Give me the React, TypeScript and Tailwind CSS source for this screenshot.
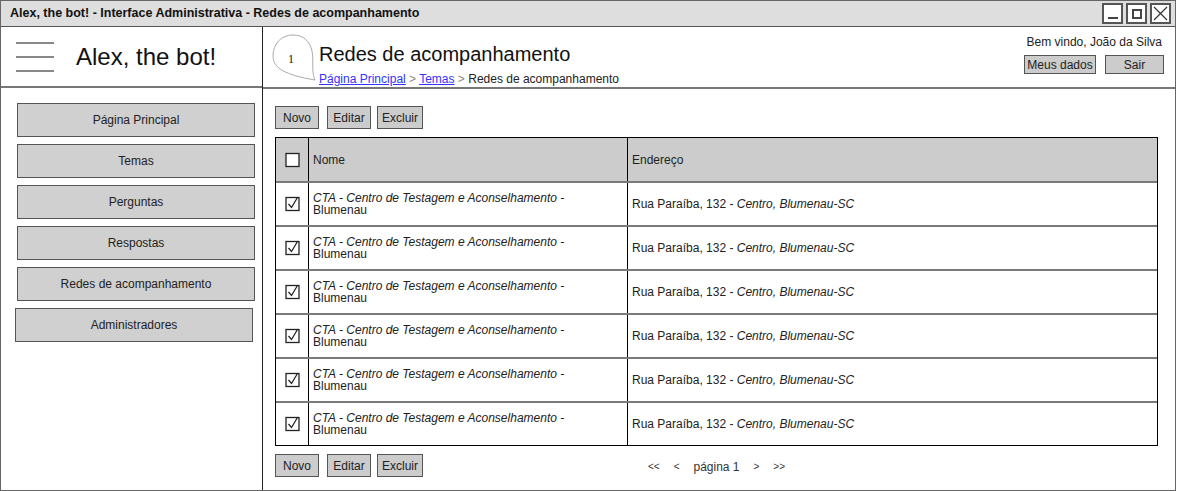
import React from "react";

const menu = [
  "Página Principal",
  "Temas",
  "Perguntas",
  "Respostas",
  "Redes de acompanhamento",
  "Administradores",
];

function Btn({ children, w }: { children: React.ReactNode; w: string }) {
  return (
    <div
      className={`${w} h-[23px] bg-[#cccccc] border-[1.5px] border-[#555] flex items-center justify-center text-[12px] text-[#222]`}
    >
      {children}
    </div>
  );
}

function CheckBox({ checked }: { checked: boolean }) {
  return (
    <svg width="16" height="16" viewBox="0 0 16 16">
      <rect x="1" y="1.5" width="13" height="13" fill="white" stroke="#222" strokeWidth="1.3" />
      {checked && (
        <path d="M3.5 8 L6.5 11.5 L12.5 1.5" fill="none" stroke="#222" strokeWidth="1.3" />
      )}
    </svg>
  );
}

function Row() {
  return (
    <div className="h-[44px] flex border-t-2 border-[#7a7a7a] text-[12px] text-[#222]">
      <div className="w-[33px] flex items-center justify-center border-r border-black pl-[1px]">
        <CheckBox checked />
      </div>
      <div className="w-[319px] border-r border-black flex flex-col justify-center pl-[4px] leading-[12px]">
        <span className="italic">CTA - Centro de Testagem e Aconselhamento -</span>
        <span>Blumenau</span>
      </div>
      <div className="flex-1 flex items-center pl-[4px]">
        <span>
          Rua Paraíba, 132 - <span className="italic">Centro, Blumenau-SC</span>
        </span>
      </div>
    </div>
  );
}

export default function App() {
  return (
    <div
      className="w-[1186px] h-[491px] bg-white"
      style={{ fontFamily: '"Liberation Sans", Arial, sans-serif' }}
    >
      <div className="w-[1176px] h-[491px] border-[1.5px] border-[#666] flex flex-col">
        {/* Title bar */}
        <div className="h-[26px] bg-[#dedede] border-b-[1.5px] border-[#555] flex items-center justify-between pl-[9px] pr-[4px] shrink-0">
          <span className="text-[12.5px] font-bold text-[#111]">
            Alex, the bot! - Interface Administrativa - Redes de acompanhamento
          </span>
          <div className="flex gap-[3px]">
            <div className="w-[21px] h-[21px] border-2 border-[#555] bg-white flex items-end justify-center pb-[3px]">
              <div className="w-[10px] h-[2px] bg-[#444]" />
            </div>
            <div className="w-[21px] h-[21px] border-2 border-[#555] bg-white flex items-center justify-center">
              <div className="w-[10px] h-[10px] border-2 border-[#444]" />
            </div>
            <div className="w-[21px] h-[21px] border-2 border-[#555] bg-white flex items-center justify-center">
              <svg width="15" height="15" viewBox="0 0 15 15">
                <path d="M1 1 L14 14 M14 1 L1 14" stroke="#333" strokeWidth="1.2" />
              </svg>
            </div>
          </div>
        </div>

        <div className="flex flex-1 min-h-0">
          {/* Left panel */}
          <div className="w-[262px] border-r-[1.5px] border-[#222] flex flex-col shrink-0">
            <div className="h-[61px] border-b-2 border-[#777] flex items-center shrink-0">
              <div className="ml-[15px] w-[38px] flex flex-col gap-[12px]">
                <div className="h-[2px] bg-[#888]" />
                <div className="h-[2px] bg-[#888]" />
                <div className="h-[2px] bg-[#888]" />
              </div>
              <span className="ml-[22px] text-[24px] text-[#111] leading-none">Alex, the bot!</span>
            </div>
            <div className="flex flex-col gap-[7px] pt-[15px] pl-[16px]">
              {menu.map((m, i) => (
                <div
                  key={m}
                  className={`w-[238px] h-[34px] bg-[#d0d0d0] border-[1.5px] border-[#555] flex items-center justify-center text-[12px] text-[#222] ${
                    i === 5 ? "-ml-[2px]" : ""
                  }`}
                >
                  {m}
                </div>
              ))}
            </div>
          </div>

          {/* Right panel */}
          <div className="flex-1 flex flex-col min-w-0">
            <div className="h-[62px] border-b-2 border-[#777] flex justify-between shrink-0">
              <div className="flex items-start pl-[8px] pt-[6px]">
                <div className="relative w-[48px] h-[50px]">
                  <svg width="48" height="50" viewBox="0 0 48 50">
                    <path
                      d="M22 2 C10 2 2 11 2 23 C2 35 14 42 44 47 C40 38 43 28 41 18 C39 8 32 2 22 2 Z"
                      fill="white"
                      stroke="#aaa"
                      strokeWidth="1"
                    />
                  </svg>
                  <span className="absolute left-[17px] top-[17px] text-[12px] text-[#111]" style={{ fontFamily: '"Liberation Serif", serif' }}>
                    1
                  </span>
                </div>
                <div className="flex flex-col">
                  <span className="text-[20px] text-[#111] leading-[24px] mt-[9px]">Redes de acompanhamento</span>
                  <span className="text-[12px] leading-[14px] mt-[6px]">
                    <span className="text-[#3333ff] underline">Página Principal</span>
                    <span className="text-[#888]"> &gt; </span>
                    <span className="text-[#3333ff] underline">Temas</span>
                    <span className="text-[#888]"> &gt; </span>
                    <span className="text-[#222]">Redes de acompanhamento</span>
                  </span>
                </div>
              </div>
              <div className="flex flex-col items-end pr-[11px] pt-[8px]">
                <span className="text-[12px] text-[#222] leading-[14px] mr-[2px]">Bem vindo, João da Silva</span>
                <div className="flex gap-[9px] mt-[6px]">
                  <div className="w-[72px] h-[19px] bg-[#cccccc] border-[1.5px] border-[#555] flex items-center justify-center text-[12px] text-[#222]">
                    Meus dados
                  </div>
                  <div className="w-[59px] h-[19px] bg-[#cccccc] border-[1.5px] border-[#555] flex items-center justify-center text-[12px] text-[#222]">
                    Sair
                  </div>
                </div>
              </div>
            </div>

            <div className="pl-[12px] pr-[16px] pt-[17px] flex flex-col">
              <div className="flex gap-[8px]">
                <Btn w="w-[44px]">Novo</Btn>
                <Btn w="w-[44px]">Editar</Btn>
                <div className="-ml-[2px]">
                  <Btn w="w-[46px]">Excluir</Btn>
                </div>
              </div>

              <div className="mt-[8px] border-[1.5px] border-black w-[883px]">
                <div className="h-[43px] flex bg-[#cccccc] text-[12px] text-[#222]">
                  <div className="w-[33px] flex items-center justify-center border-r border-black pl-[1px]">
                    <CheckBox checked={false} />
                  </div>
                  <div className="w-[319px] border-r border-black flex items-center pl-[4px]">Nome</div>
                  <div className="flex-1 flex items-center pl-[4px]">Endereço</div>
                </div>
                {[0, 1, 2, 3, 4, 5].map((i) => (
                  <Row key={i} />
                ))}
              </div>

              <div className="mt-[8px] w-[883px] grid grid-cols-[1fr_auto_1fr] items-center">
                <div className="flex gap-[8px]">
                  <Btn w="w-[44px]">Novo</Btn>
                  <Btn w="w-[44px]">Editar</Btn>
                  <div className="-ml-[2px]">
                    <Btn w="w-[46px]">Excluir</Btn>
                  </div>
                </div>
                <div className="flex items-center text-[12px] text-[#333] gap-[14px] pt-[2px]">
                  <span className="text-[10px]">&lt;&lt;</span>
                  <span className="text-[10px]">&lt;</span>
                  <span>página 1</span>
                  <span className="text-[10px]">&gt;</span>
                  <span className="text-[10px]">&gt;&gt;</span>
                </div>
                <div />
              </div>
            </div>
          </div>
        </div>
      </div>
    </div>
  );
}
